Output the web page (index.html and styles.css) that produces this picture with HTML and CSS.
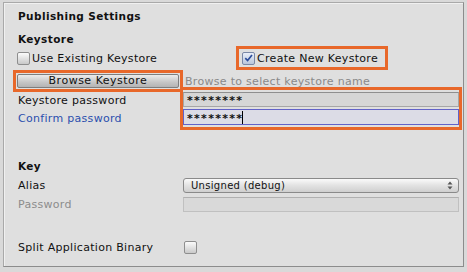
FILE: index.html
```html
<!DOCTYPE html>
<html>
<head>
<meta charset="utf-8">
<link rel="stylesheet" href="styles.css">
</head>
<body>
<div class="panel">
  <div class="row title">Publishing Settings</div>
  <div class="row heading h-keystore">Keystore</div>
  <div class="row r-choice">
    <label class="choice use"><span class="cb"></span>Use Existing Keystore</label>
    <label class="choice create"><span class="cb checked"><svg viewBox="0 0 12 12" width="12" height="12"><path d="M2.5 6.2 L5 8.8 L9.8 2.6" fill="none" stroke="#2b4c9a" stroke-width="1.8"/></svg></span>Create New Keystore</label>
  </div>
  <div class="row r-browse">
    <div class="lbl"><span class="btn-wrap"><button class="btn">Browse Keystore</button></span></div>
    <div class="hint">Browse to select keystore name</div>
  </div>
  <div class="pw-group">
    <div class="labels">
      <div class="row">Keystore password</div>
      <div class="row blue">Confirm password</div>
    </div>
    <div class="fields">
      <div class="row"><div class="field"><span class="stars">********</span></div></div>
      <div class="row"><div class="field focus"><span class="stars">********</span><span class="caret"></span></div></div>
    </div>
  </div>
  <div class="row heading h-key">Key</div>
  <div class="row r-alias">
    <div class="lbl">Alias</div>
    <div class="select">Unsigned (debug)<svg class="arrows" viewBox="0 0 6 9" width="6" height="9"><path d="M3 0.5 L5.5 3.5 H0.5 Z M3 8.5 L5.5 5.5 H0.5 Z" fill="#555"/></svg></div>
  </div>
  <div class="row r-pw">
    <div class="lbl gray">Password</div>
    <div class="field disabled"></div>
  </div>
  <div class="row r-split">
    <div class="lbl">Split Application Binary</div>
    <span class="cb split"></span>
  </div>
</div>
</body>
</html>
```
FILE: styles.css
```css
html, body {
  margin: 0;
  padding: 0;
}
body {
  width: 467px;
  height: 272px;
  background: #d9d9d9;
  font-family: "DejaVu Sans", Verdana, sans-serif;
  font-size: 11px;
  letter-spacing: 0.3px;
  color: #111;
  overflow: hidden;
}
.panel {
  margin: 2px 3px 0 3px;
  height: 265px;
  box-sizing: border-box;
  border: 1px solid #a9a9a9;
  border-right-color: #8c8c8c;
  border-bottom-color: #8c8c8c;
  box-shadow: inset 1px 1px 0 #f0f0f0;
  background: #dfdfdf;
  padding: 4px 0 0 14px;
}
.row {
  height: 18px;
  display: flex;
  align-items: center;
  white-space: nowrap;
}
.title, .heading {
  font-weight: bold;
  font-size: 10.5px;
  letter-spacing: 0.4px;
}
.h-keystore { margin-top: 5px; }
.r-choice { margin-top: 1px; }
.choice {
  display: flex;
  align-items: center;
  height: 18px;
}
.use {
  width: 221px;
  flex: none;
}
.choice .cb { margin: 0 2px 0 -1px; }
.create {
  padding: 0 7px 0 3px;
  outline: 3px solid #e8682a;
}
.create .cb { margin-left: 0; }
.cb {
  width: 11px;
  height: 11px;
  border: 1px solid #8e8e8e;
  border-radius: 2px;
  background: linear-gradient(#fbfbfb, #c9c9c9);
  display: inline-flex;
  align-items: center;
  justify-content: center;
  box-sizing: content-box;
  flex: none;
}
.cb.checked {
  background: linear-gradient(#e9eef8, #b9c6dc);
  border-color: #7a88a6;
}
.cb svg { display: block; }
.r-browse { margin-top: 5px; }
.lbl {
  width: 165px;
  flex: none;
}
.btn-wrap {
  display: block;
  width: 162px;
  margin-left: -2px;
  padding: 1px;
  outline: 3px solid #e8682a;
}
.btn {
  display: block;
  width: 162px;
  height: 14px;
  padding: 0;
  border: 1px solid #7e7e7e;
  border-radius: 2px;
  background: linear-gradient(#ececec, #c6c6c6 60%, #b4b4b4);
  font-family: inherit;
  font-size: 11px;
  letter-spacing: 0.5px;
  line-height: 12px;
  color: #111;
}
.hint {
  color: #8a8a8a;
  margin-left: 2px;
}
.pw-group {
  display: flex;
}
.labels {
  width: 165px;
  flex: none;
}
.labels .row:first-child { margin-top: 1px; }
.blue { color: #2b4fae; }
.fields {
  width: 276px;
  outline: 3px solid #e8682a;
  outline-offset: 0px;
}
.field {
  width: 100%;
  height: 15px;
  box-sizing: border-box;
  border: 1px solid #a6a6a6;
  border-top-color: #8f8f8f;
  background: #d6d6d6;
  padding: 0 0 0 3px;
  line-height: 13px;
  display: flex;
  align-items: center;
}
.stars {
  font-weight: bold;
  font-size: 11px;
  letter-spacing: 1.3px;
  position: relative;
  top: 1px;
}
.field.focus {
  height: 16px;
  border: 1px solid #6262c8;
  background: #dcdce6;
}
.caret {
  display: inline-block;
  width: 1px;
  height: 13px;
  background: #000;
  margin-left: -1px;
}
.h-key { margin-top: 30px; }
.r-alias { margin-top: 1px; }
.select {
  width: 276px;
  height: 15px;
  box-sizing: border-box;
  border: 1px solid #8a8a8a;
  border-radius: 3px;
  background: linear-gradient(#fafafa, #e2e2e2 50%, #cfcfcf);
  padding: 0 5px 0 7px;
  display: flex;
  align-items: center;
  justify-content: space-between;
  font-size: 10px;
  letter-spacing: 0.3px;
}
.r-pw { margin-top: 1px; }
.gray { color: #8c8c8c; }
.field.disabled {
  width: 276px;
  background: #d9d9d9;
  border-color: #c0c0c0;
  border-top-color: #b0b0b0;
}
.r-split { margin-top: 25px; }
.cb.split { margin-left: 1px; }
```
